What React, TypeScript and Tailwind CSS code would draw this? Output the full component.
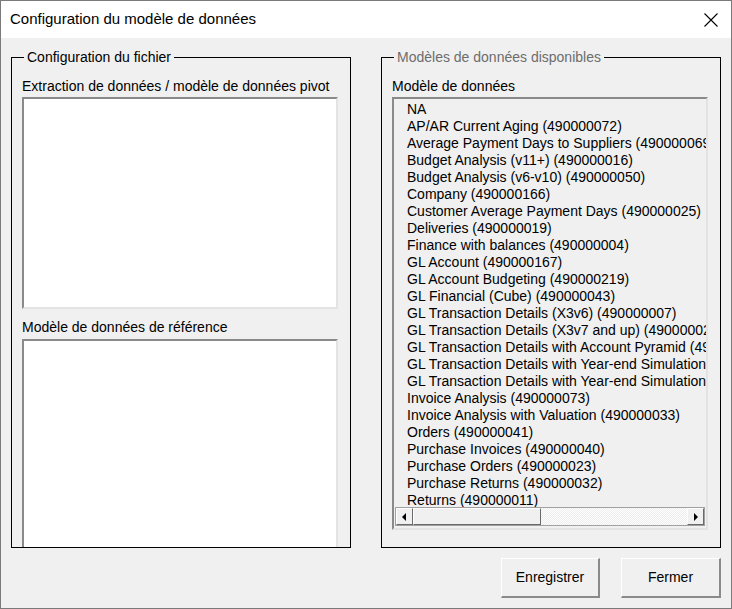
import React from "react";

const models = [
  "NA",
  "AP/AR Current Aging (490000072)",
  "Average Payment Days to Suppliers (490000069)",
  "Budget Analysis (v11+) (490000016)",
  "Budget Analysis (v6-v10) (490000050)",
  "Company (490000166)",
  "Customer Average Payment Days (490000025)",
  "Deliveries (490000019)",
  "Finance with balances (490000004)",
  "GL Account (490000167)",
  "GL Account Budgeting (490000219)",
  "GL Financial (Cube) (490000043)",
  "GL Transaction Details (X3v6) (490000007)",
  "GL Transaction Details (X3v7 and up) (490000027)",
  "GL Transaction Details with Account Pyramid (490000028)",
  "GL Transaction Details with Year-end Simulation (490000029)",
  "GL Transaction Details with Year-end Simulation & Pyramid (490000030)",
  "Invoice Analysis (490000073)",
  "Invoice Analysis with Valuation (490000033)",
  "Orders (490000041)",
  "Purchase Invoices (490000040)",
  "Purchase Orders (490000023)",
  "Purchase Returns (490000032)",
  "Returns (490000011)",
];

const font = "font-['Liberation_Sans',Arial,sans-serif]";

const ScrollButton = ({ dir }: { dir: "left" | "right" }) => (
  <div className="w-[17px] h-[17px] shrink-0 bg-[#f0f0f0] border-t border-l border-white border-r border-b border-r-[#696969] border-b-[#696969] flex items-center justify-center">
    <svg width="5" height="8" viewBox="0 0 5 8">
      {dir === "left" ? (
        <path d="M4 0 L0 4 L4 8 Z" fill="#000" />
      ) : (
        <path d="M1 0 L5 4 L1 8 Z" fill="#000" />
      )}
    </svg>
  </div>
);

export default function App() {
  return (
    <div className={`w-[732px] h-[609px] flex flex-col border border-[#7a7a7a] text-black ${font}`}>
      {/* Title bar */}
      <div className="h-[37px] shrink-0 bg-white flex items-center justify-between pl-[9px] pr-[13px]">
        <span className="text-[15px]">Configuration du modèle de données</span>
        <svg width="14" height="14" viewBox="0 0 14 14">
          <path d="M0.5 0.5 L13.5 13.5 M13.5 0.5 L0.5 13.5" stroke="#000" strokeWidth="1.1" />
        </svg>
      </div>

      {/* Body */}
      <div className="flex-1 bg-[#f0f0f0] flex flex-col px-[10px] pt-[10px] text-[14px]">
        <div className="flex gap-[30px]">
          {/* Left group */}
          <fieldset className="w-[340px] h-[500px] border border-black px-[10px] overflow-hidden">
            <legend className="ml-[2px] px-[3px] leading-[18px]">Configuration du fichier</legend>
            <div className="mt-[11px] leading-[18px]">Extraction de données / modèle de données pivot</div>
            <div className="mt-[2px] w-[316px] h-[212px] bg-white border-t-2 border-l-2 border-[#8a8a8a] border-r-2 border-b-2 border-r-[#e3e3e3] border-b-[#e3e3e3]" />
            <div className="mt-[9px] leading-[18px]">Modèle de données de référence</div>
            <div className="mt-[3px] w-[316px] h-[230px] bg-white border-t-2 border-l-2 border-[#8a8a8a] border-r-2 border-r-[#e3e3e3]" />
          </fieldset>

          {/* Right group */}
          <fieldset className="w-[340px] h-[500px] border border-black px-[10px] overflow-hidden">
            <legend className="ml-[2px] px-[3px] leading-[18px] text-[#6d6d6d]">Modèles de données disponibles</legend>
            <div className="mt-[11px] leading-[18px]">Modèle de données</div>
            <div className="mt-[2px] w-[316px] h-[433px] flex flex-col bg-[#f0f0f0] border-t-2 border-l-2 border-[#8a8a8a] border-r-2 border-b-2 border-r-[#e3e3e3] border-b-[#e3e3e3]">
              <div className="flex-1 overflow-hidden pt-[2px] pl-[13px]">
                {models.map((m) => (
                  <div key={m} className="whitespace-nowrap leading-[17px]">
                    {m}
                  </div>
                ))}
              </div>
              <div className="mx-[1px] mb-[2px] h-[19px] flex bg-[#f6f6f6] border-t border-l border-[#a0a0a0] border-r border-b border-r-[#a0a0a0] border-b-[#a0a0a0]">
                <ScrollButton dir="left" />
                <div className="w-[128px] h-[17px] bg-[#f0f0f0] border-t border-l border-white border-r border-b border-r-[#696969] border-b-[#696969]" />
                <div className="flex-1 bg-[repeating-conic-gradient(#ffffff_0_25%,#ececec_0_50%)] bg-[length:2px_2px]" />
                <ScrollButton dir="right" />
              </div>
            </div>
          </fieldset>
        </div>

        {/* Buttons */}
        <div className="mt-[10px] flex justify-end gap-[21px]">
          <button className="w-[99px] h-[40px] bg-[#f0f0f0] border-t border-l border-white border-r-2 border-b-2 border-r-[#8a8a8a] border-b-[#8a8a8a] text-[14px]">
            Enregistrer
          </button>
          <button className="w-[100px] h-[40px] bg-[#f0f0f0] border-t border-l border-white border-r-2 border-b-2 border-r-[#8a8a8a] border-b-[#8a8a8a] text-[14px]">
            Fermer
          </button>
        </div>
      </div>
    </div>
  );
}
